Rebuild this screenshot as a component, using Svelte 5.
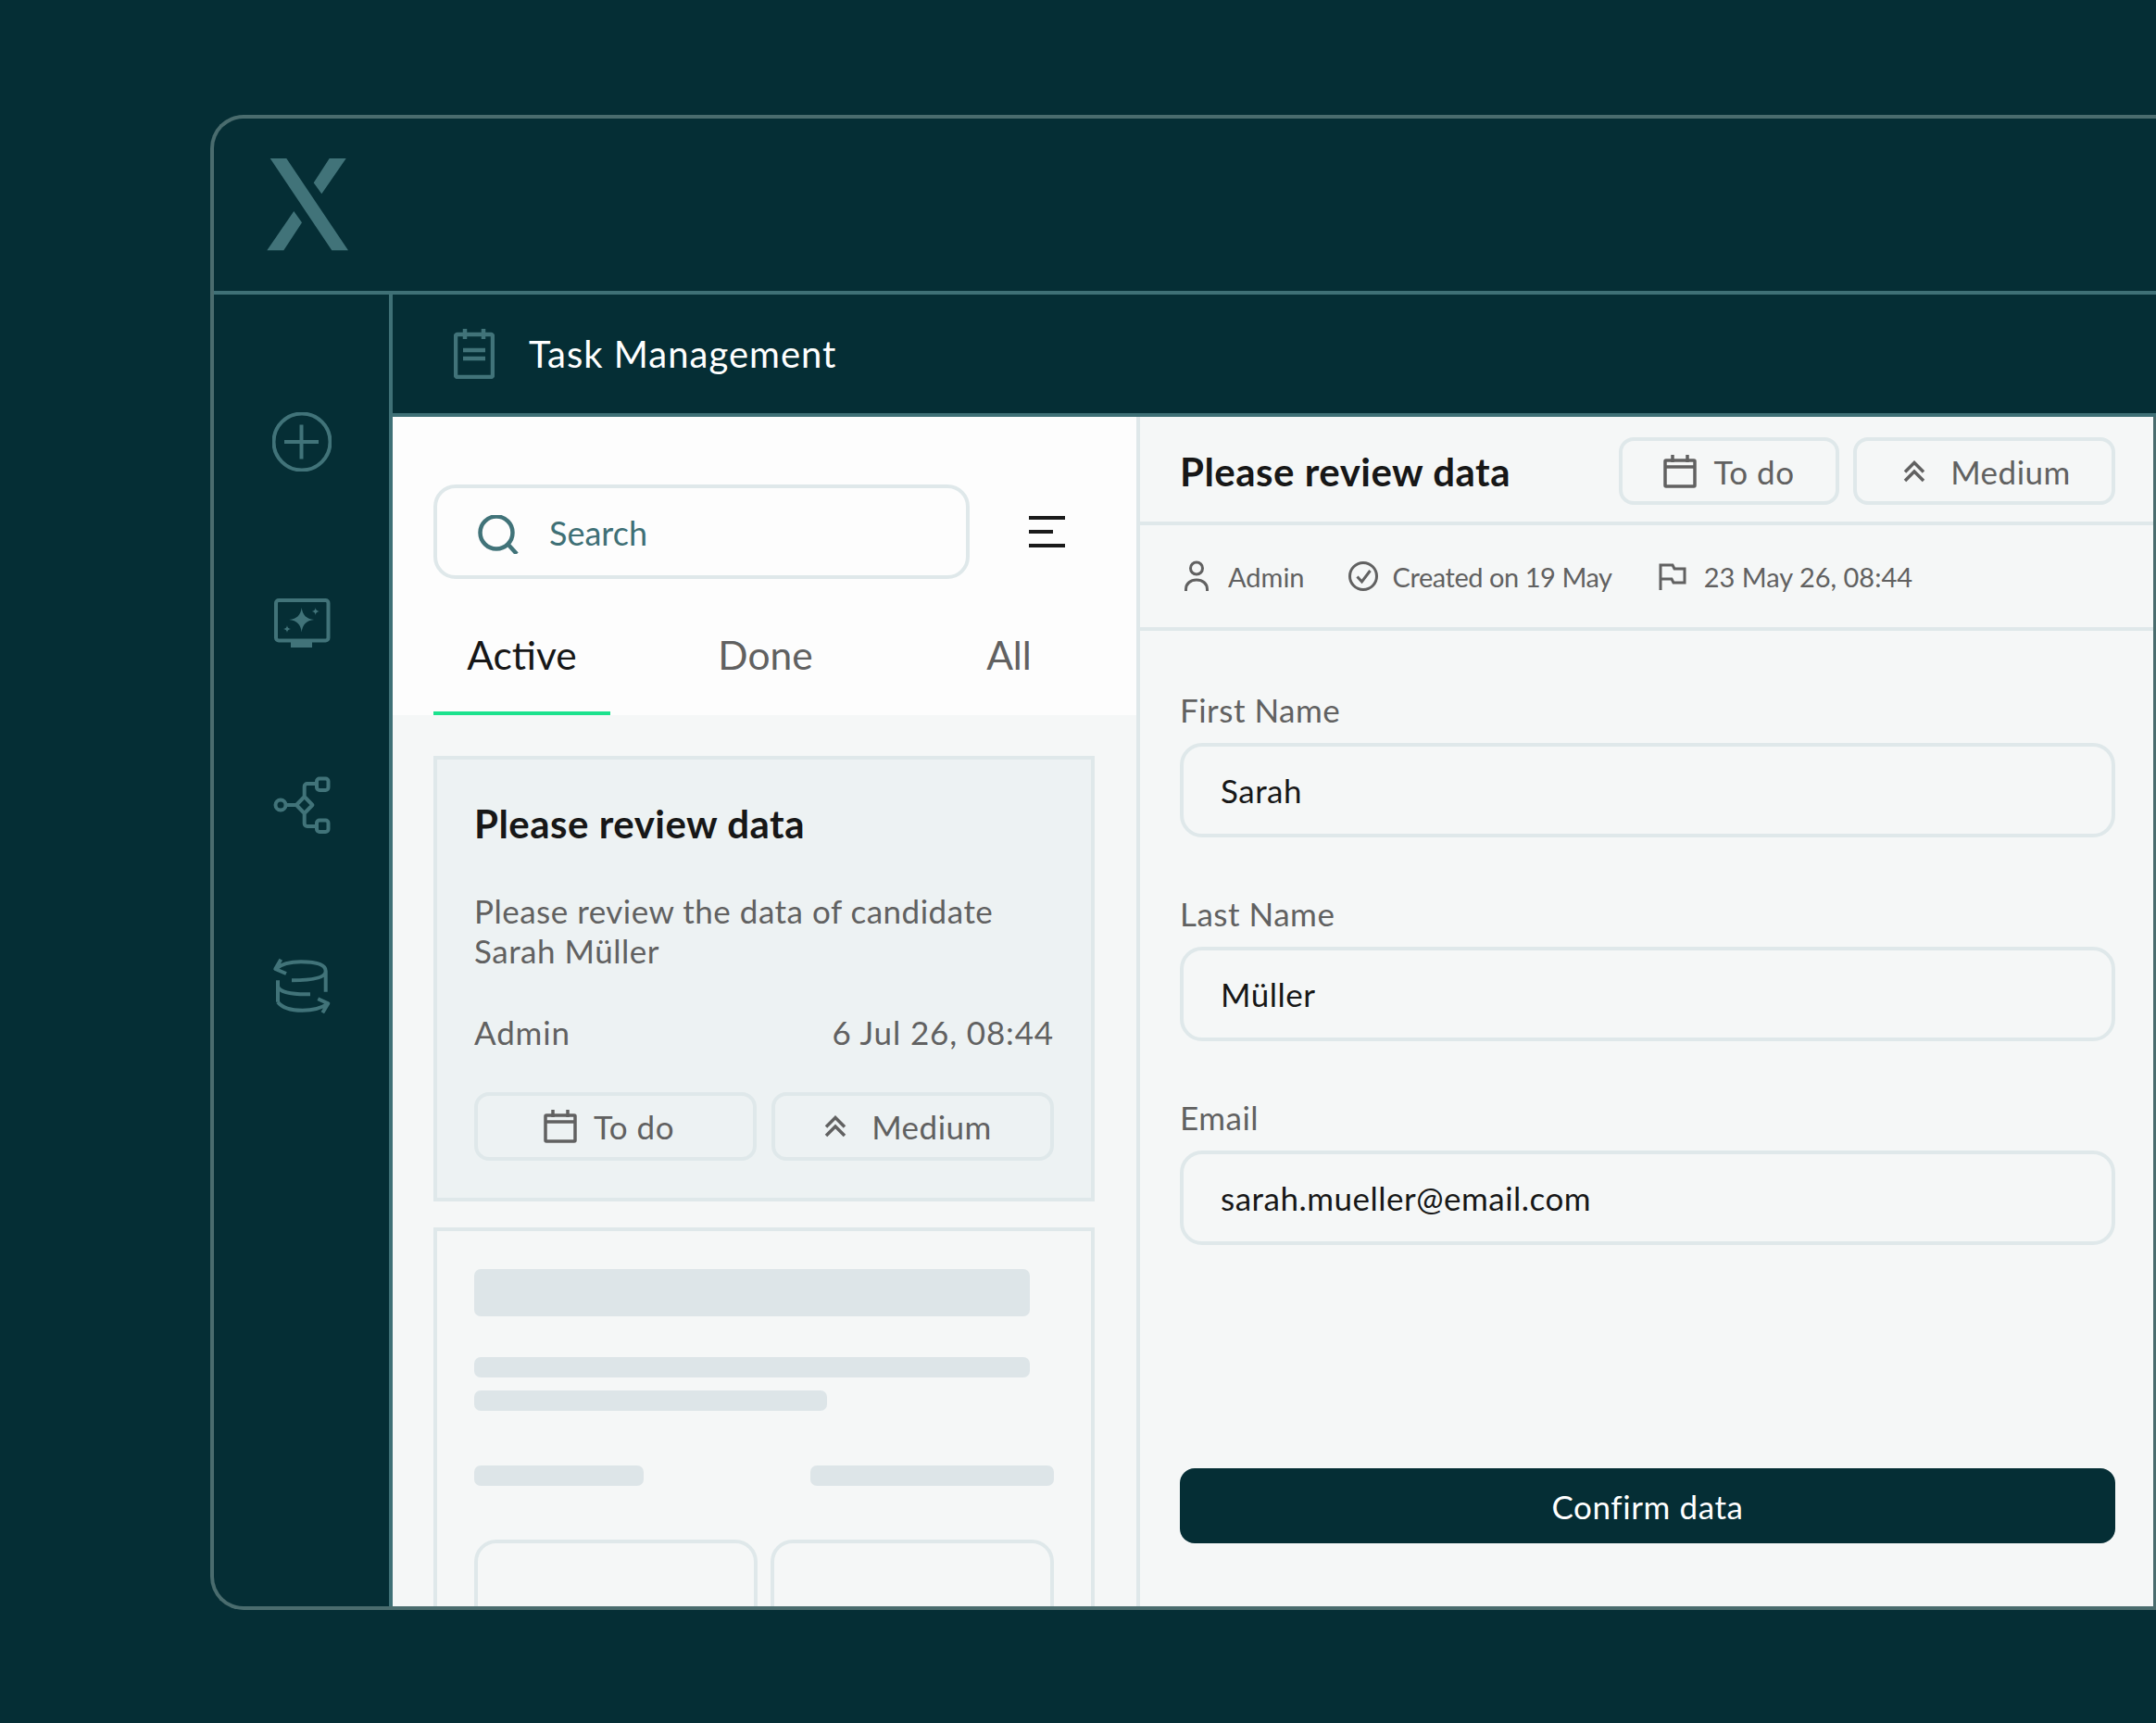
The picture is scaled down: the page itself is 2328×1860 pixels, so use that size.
<script>
  const fields = [
    { label: 'First Name', value: 'Sarah' },
    { label: 'Last Name', value: 'Müller' },
    { label: 'Email', value: 'sarah.mueller@email.com' }
  ];
</script>

{#snippet calendar()}
  <svg class="cal" viewBox="0 0 36 36" width="36" height="36" aria-hidden="true">
    <rect x="2" y="6" width="32" height="28" rx="1" />
    <path d="M2 13H34M10 0V8M26 0V8" />
  </svg>
{/snippet}

{#snippet chevrons()}
  <svg class="chev" viewBox="0 0 24 24" width="24" height="24" aria-hidden="true">
    <path d="M2 12.5 12 2.5l10 10M2 22l10-10 10 10" />
  </svg>
{/snippet}

<div class="frame">
  <header class="top">
    <svg class="logo" viewBox="288 171 88 100" width="88" height="100" aria-label="logo">
      <path d="M291.7 171h17.6L376 270.3h-17.7zM355.7 171h18l-26.4 38.3-8.6-12zM288.3 270.3h18l19.7-30-8.7-12.3z" />
    </svg>
  </header>
  <div class="body">
    <nav class="side">
      <svg viewBox="294 445 64 64" width="64" height="64" aria-hidden="true">
        <circle cx="326" cy="477" r="30.5" /><path d="M307 477h37M325.500 458.500v37" />
      </svg>
      <svg viewBox="294 641 64 64" width="64" height="64" aria-hidden="true">
        <rect x="298" y="648" width="56.500" height="43.500" rx="3" />
        <path class="fill" d="M314 693h23v6h-23zM325.700 656c1 8 5 12 13.500 13-8.500 1-12.500 5-13.500 13.500-1-8.500-5-12.500-13.500-13.500 8.500-1 12.500-5 13.500-13zM340.700 656c.4 2.600 1.400 3.600 4 4-2.600.4-3.600 1.400-4 4-.4-2.600-1.400-3.600-4-4 2.600-.4 3.600-1.400 4-4zM310 675c.4 2.600 1.400 3.600 4 4-2.600.4-3.600 1.400-4 4-.4-2.600-1.400-3.600-4-4 2.600-.4 3.600-1.400 4-4z" />
      </svg>
      <svg class="thin" viewBox="294 837 64 64" width="64" height="64" aria-hidden="true">
        <circle cx="303" cy="869" r="5.500" />
        <path d="M308.500 869h11.500M328.700 860l8.700 9-8.700 9-8.700-9zM328.700 860v-11a3 3 0 0 1 3-3h10M328.700 878v11a3 3 0 0 0 3 3h10" />
        <rect x="342" y="840.500" width="12.500" height="12.500" rx="3" />
        <rect x="342" y="885.500" width="12.500" height="12.500" rx="3" />
      </svg>
      <svg class="thin" viewBox="294 1033 64 64" width="64" height="64" aria-hidden="true">
        <path d="M315 1058.300Q351.700 1058.300 351.700 1048.300 351.700 1038.300 325 1038.300 306.700 1038.300 297.300 1046M303.300 1035.700l-6 10.300 11.700 5M351.700 1048.300v22.400M300 1058.300v23.400M300 1065q3.300 9 35 8.300M300 1081.700q6.700 9 26.700 9 16.600 0 27.600-7.400M343.300 1078.300l11 5-6 10" />
      </svg>
    </nav>
    <main class="main">
      <div class="title-bar">
        <svg class="task" viewBox="490 353 44 54" width="44" height="54" aria-hidden="true">
          <rect x="492" y="359" width="40" height="46" rx="2" />
          <path d="M502 353v11M522 353v11M500 376h24M500 385h24" />
        </svg>
        <span>Task Management</span>
      </div>
      <div class="panel">
        <section class="left">
          <div class="left-top">
            <div class="search-row">
              <div class="search">
                <svg viewBox="0 0 44 42" width="44" height="42" aria-hidden="true">
                  <circle cx="20" cy="19" r="17.500" /><path d="M32 31l10 11" />
                </svg>
                <span>Search</span>
              </div>
              <svg class="filter" viewBox="0 0 39 34" width="39" height="34" aria-hidden="true">
                <path d="M0 0h39v4H0zM0 15h26v4H0zM0 30h39v4H0z" />
              </svg>
            </div>
            <div class="tabs">
              <div class="tab active">Active</div>
              <div class="tab">Done</div>
              <div class="tab">All</div>
            </div>
          </div>
          <div class="list">
            <article class="card selected">
              <h3>Please review data</h3>
              <p>Please review the data of candidate<br />Sarah Müller</p>
              <div class="card-row"><span>Admin</span><span>6 Jul 26, 08:44</span></div>
              <div class="card-badges">
                <div class="badge c-todo">{@render calendar()}<span>To do</span></div>
                <div class="badge c-med wide">{@render chevrons()}<span>Medium</span></div>
              </div>
            </article>
            <article class="card ghost">
              <div class="bar b-title"></div>
              <div class="bar b-line"></div>
              <div class="bar b-short"></div>
              <div class="b-row"><div class="bar b-a"></div><div class="bar b-b"></div></div>
              <div class="card-badges ghost-badges"><div class="badge"></div><div class="badge"></div></div>
            </article>
          </div>
        </section>
        <section class="right">
          <div class="right-head">
            <h2>Please review data</h2>
            <div class="head-badges">
              <div class="badge b-todo">{@render calendar()}<span>To do</span></div>
              <div class="badge b-med wide">{@render chevrons()}<span>Medium</span></div>
            </div>
          </div>
          <div class="meta">
            <div class="meta-item">
              <svg viewBox="1278 604 28 34" width="28" height="34" aria-hidden="true">
                <circle cx="1292" cy="612.500" r="6.500" /><path d="M1280.500 637v-2c0-6 5-10 11.500-10s11.500 4 11.500 10v2" />
              </svg>
              <span>Admin</span>
            </div>
            <div class="meta-item">
              <svg viewBox="1454 605 34 34" width="34" height="34" aria-hidden="true">
                <circle cx="1471" cy="622" r="14.500" /><path d="M1464.500 622.500l5 5.500 9-12" />
              </svg>
              <span>Created on 19 May</span>
            </div>
            <div class="meta-item">
              <svg viewBox="1790 606 32 32" width="32" height="32" aria-hidden="true">
                <path d="M1793 637v-27h13l2 4h11v15h-12l-2-4h-12" />
              </svg>
              <span>23 May 26, 08:44</span>
            </div>
          </div>
          <div class="form">
            {#each fields as f}
              <div class="field">
                <div class="label">{f.label}</div>
                <div class="input">{f.value}</div>
              </div>
            {/each}
            <button class="confirm">Confirm data</button>
          </div>
        </section>
      </div>
    </main>
  </div>
</div>

<style>
  :global(html), :global(body) { margin: 0; background: #052e35; overflow: hidden; }
  * { box-sizing: border-box; }
  .frame {
    margin: 124px 0 0 227px;
    width: 2101px;
    height: 1614px;
    border: 4px solid #4a6c6e;
    border-right: 0;
    border-radius: 36px 0 0 36px;
    display: flex;
    flex-direction: column;
    font-family: Lato, "Open Sans", sans-serif;
    letter-spacing: 0.5px;
  }
  .top {
    height: 190px;
    flex: none;
    border-bottom: 4px solid #3f7076;
    padding: 43px 0 0 57px;
  }
  .logo { display: block; fill: #417379; }
  .body { flex: 1; display: flex; min-height: 0; }
  .side {
    width: 193px;
    flex: none;
    border-right: 4px solid #3f7076;
    display: flex;
    flex-direction: column;
    align-items: center;
    gap: 132px;
    padding-top: 127px;
  }
  .side svg { fill: none; stroke: #417379; stroke-width: 4; stroke-linejoin: round; }
  .side .fill { fill: #417379; stroke: none; }
  .main { flex: 1; min-width: 0; display: flex; flex-direction: column; }
  .title-bar {
    height: 132px;
    flex: none;
    border-bottom: 4px solid #3f7076;
    display: flex;
    align-items: center;
    padding-left: 66px;
    gap: 37px;
    color: #fff;
    font-size: 40px;
    letter-spacing: 1px;
  }
  .task { fill: none; stroke: #417379; stroke-width: 4.5; }
  .panel { flex: 1; display: flex; min-height: 0; border-right: 3px solid #4a6c6e; }

  .left {
    width: 807px;
    flex: none;
    border-right: 4px solid #dfe8ea;
    background: #f5f7f7;
    display: flex;
    flex-direction: column;
    overflow: hidden;
  }
  .left-top { background: #fdfdfd; height: 322px; flex: none; padding: 73px 0 0 44px; }
  .search-row { display: flex; align-items: center; }
  .search {
    width: 579px;
    height: 102px;
    border: 4px solid #dfe8ea;
    border-radius: 24px;
    display: flex;
    align-items: center;
    padding-left: 44px;
    gap: 33px;
    color: #3f7076;
    font-size: 36px;
    letter-spacing: 0;
  }
  .search span { padding-top: 2px; }
  .search svg { fill: none; stroke: #417379; stroke-width: 4.5; margin-top: 6px; }
  .filter { margin-left: 64px; fill: #1a1a1a; margin-top: 0; }
  .tabs { display: flex; justify-content: space-between; margin-top: 27px; padding-right: 42px; }
  .tab {
    width: 191px;
    height: 120px;
    line-height: 110px;
    text-align: center;
    font-size: 42.5px;
    letter-spacing: 0;
    color: #616161;
  }
  .tab.active { color: #171717; border-bottom: 4px solid #1ce28e; }

  .list { padding: 44px 45px 0 44px; display: flex; flex-direction: column; gap: 28px; }
  .card { border: 4px solid #dfe8ea; padding: 44px 40px 40px; flex: none; }
  .selected { background: #edf2f3; }
  h3, h2 { margin: 0; font-weight: 700; color: #171717; font-size: 42px; line-height: 50px; }
  p { margin: 48px 0 0; color: #616161; font-size: 35px; line-height: 43px; }
  .card-row {
    display: flex;
    justify-content: space-between;
    margin-top: 44px;
    line-height: 44px;
    font-size: 35px;
    letter-spacing: 0.85px;
    color: #616161;
  }
  .card-badges { display: grid; grid-template-columns: 305px 305px; gap: 16px; margin-top: 43px; }
  .badge {
    height: 74px;
    border: 4px solid #dfe8ea;
    border-radius: 16px;
    display: flex;
    align-items: center;
    justify-content: center;
    gap: 18px;
    color: #616161;
    font-size: 35px;
  }
  .badge.wide { gap: 27px; }
  .c-todo { padding-right: 14px; }
  .c-med { padding-right: 10px; }
  .cal { fill: none; stroke: #616161; stroke-width: 3.5; flex: none; }
  .chev { fill: none; stroke: #616161; stroke-width: 3.5; flex: none; }

  .ghost { padding-top: 41px; padding-bottom: 0; }
  .bar { background: #dde5e8; border-radius: 7px; }
  .b-title { width: 600px; height: 51px; }
  .b-line { width: 600px; height: 22px; margin-top: 44px; }
  .b-short { width: 381px; height: 22px; margin-top: 14px; }
  .b-row { display: flex; justify-content: space-between; margin-top: 59px; }
  .b-a { width: 183px; height: 22px; }
  .b-b { width: 263px; height: 22px; }
  .ghost-badges { margin-top: 58px; grid-template-columns: 306px 306px; gap: 14px; }
  .ghost-badges .badge { height: 100px; border-radius: 24px; }

  .right { flex: 1; min-width: 0; background: #f5f7f7; display: flex; flex-direction: column; }
  .right-head {
    height: 117px;
    flex: none;
    border-bottom: 4px solid #dfe8ea;
    display: flex;
    justify-content: space-between;
    padding: 22px 41px 0 43px;
  }
  .right-head h2 { margin-top: 12px; }
  .head-badges { display: flex; gap: 15px; }
  .b-todo { width: 238px; height: 73px; }
  .b-med { width: 283px; height: 73px; padding-left: 6px; }
  .meta {
    height: 114px;
    flex: none;
    border-bottom: 4px solid #dfe8ea;
    display: flex;
    align-items: center;
    padding-left: 47px;
    color: #616161;
    font-size: 29px;
    letter-spacing: 0;
    gap: 46px;
  }
  .meta-item { display: flex; align-items: center; gap: 20px; }
  .meta-item:nth-child(2) { gap: 15px; letter-spacing: -0.45px; }
  .meta-item:nth-child(3) { gap: 18px; margin-left: 3px; }
  .meta svg { fill: none; stroke: #616161; stroke-width: 3; flex: none; }
  .form { flex: 1; min-height: 0; display: flex; flex-direction: column; gap: 62px; padding: 65px 41px 68px 43px; }
  .label { line-height: 40px; font-size: 35px; color: #616161; margin-bottom: 16px; }
  .input {
    height: 102px;
    border: 4px solid #dfe8ea;
    border-radius: 24px;
    display: flex;
    align-items: center;
    padding-left: 40px;
    font-size: 35px;
    color: #171717;
  }
  .confirm {
    margin-top: auto;
    height: 81px;
    flex: none;
    border: 0;
    border-radius: 16px;
    background: #052e35;
    color: #fff;
    font: 400 35px Lato, sans-serif;
    letter-spacing: 0.6px;
  }
</style>
